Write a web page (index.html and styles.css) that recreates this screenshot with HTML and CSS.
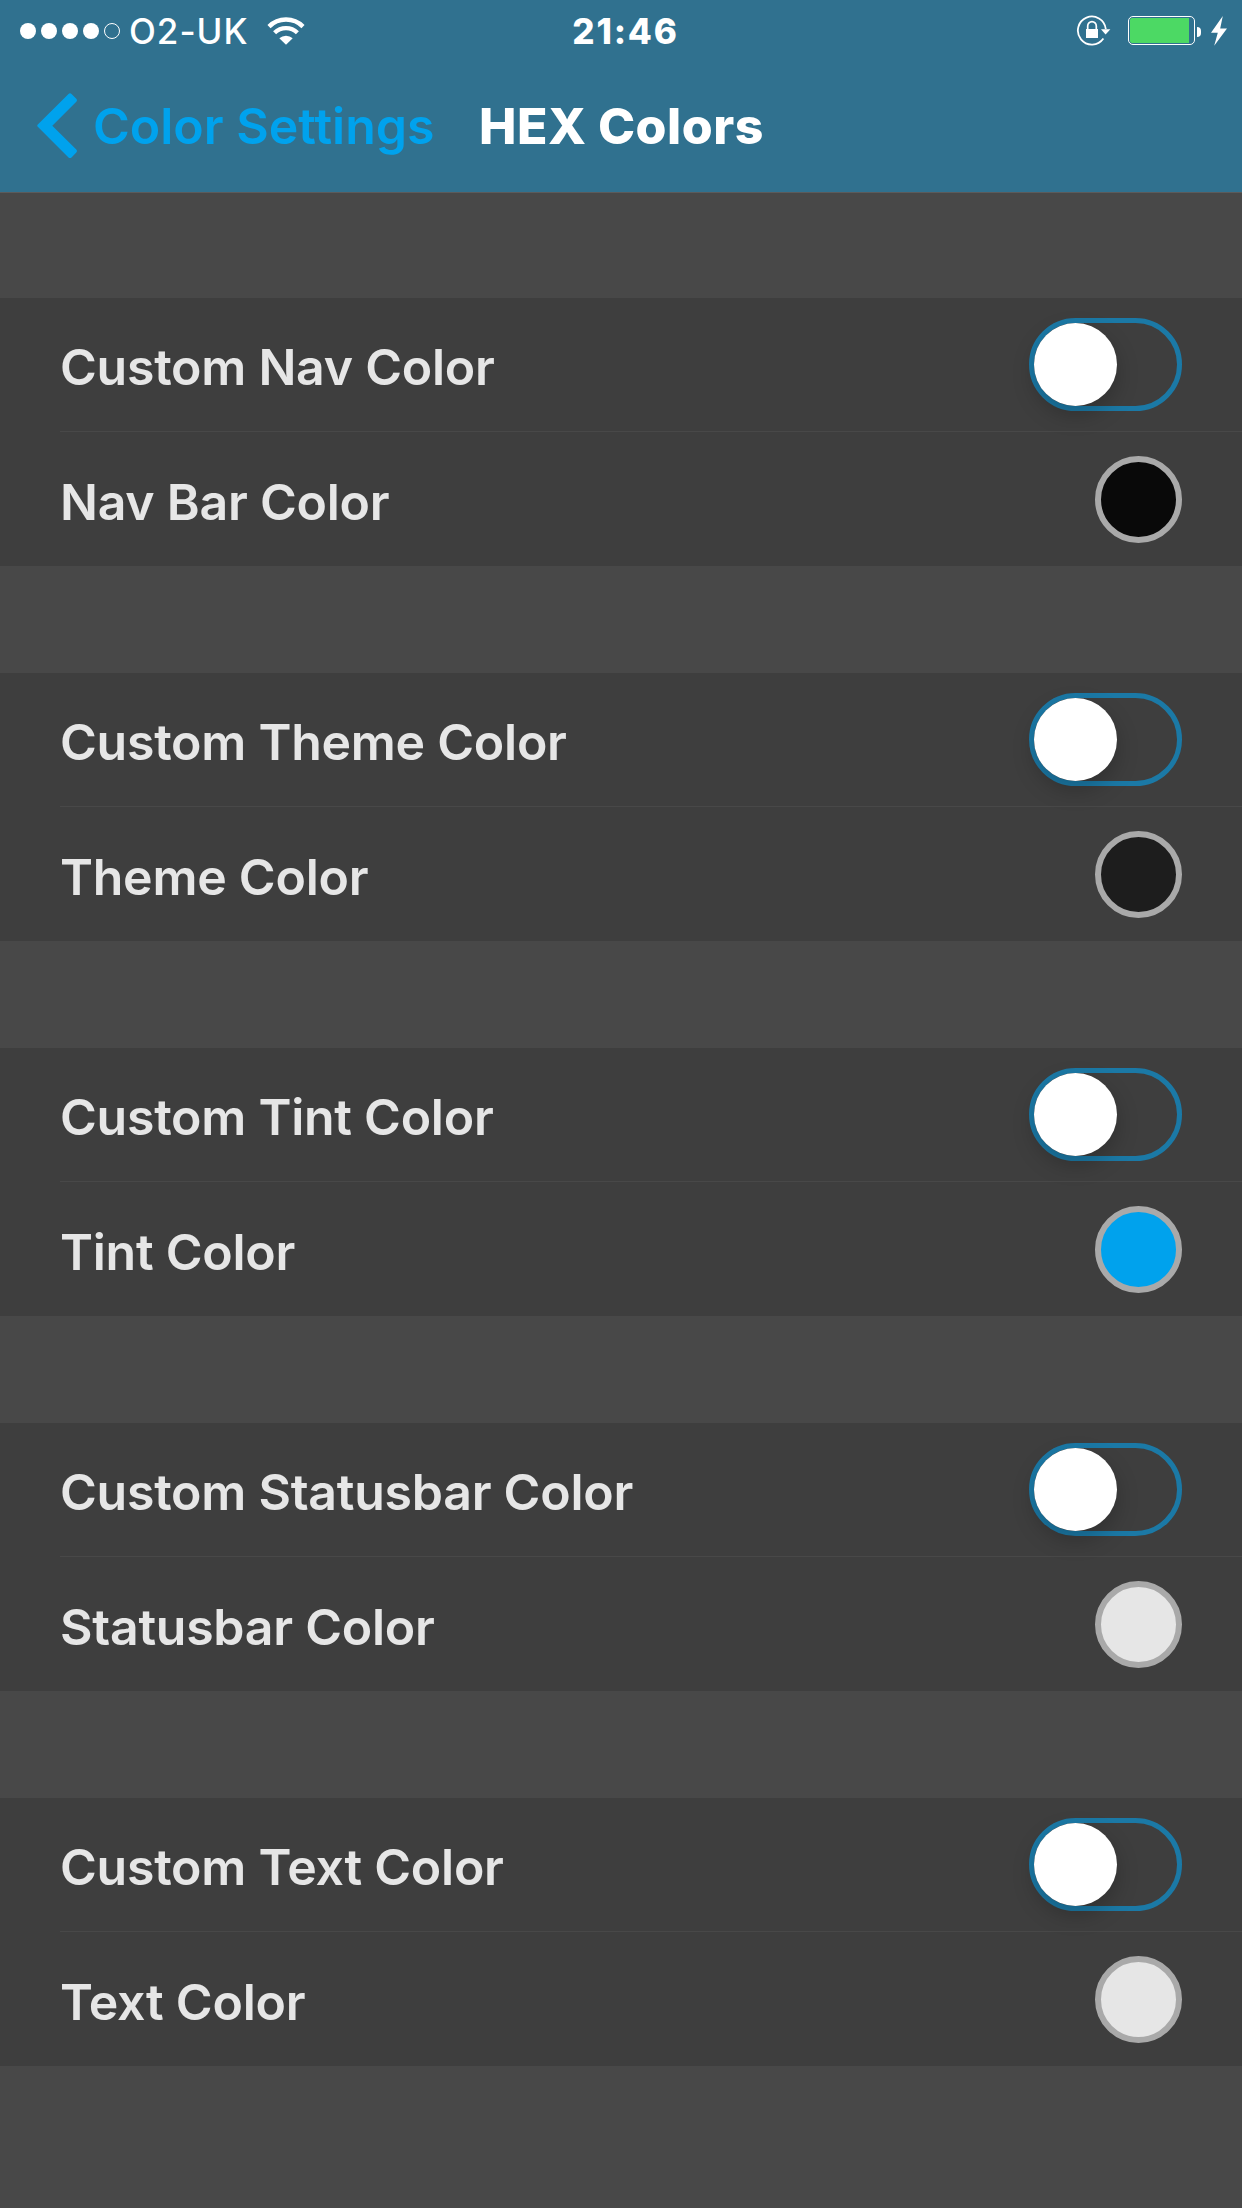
FILE: index.html
```html
<!DOCTYPE html>
<html lang="en">
<head>
  <meta charset="UTF-8">
  <meta name="viewport" content="width=device-width, initial-scale=1.0">
  <title>HEX Colors</title>
  <link rel="stylesheet" href="styles.css">
</head>
<body>
  <header class="header">
    <div class="status-bar">
      <div class="status-left">
        <div class="signal">
          <span class="dot"></span>
          <span class="dot"></span>
          <span class="dot"></span>
          <span class="dot"></span>
          <span class="dot empty"></span>
        </div>
        <span class="carrier">O2-UK</span>
        <svg class="wifi" width="38" height="28" viewBox="0 0 38 28">
          <path d="M2 9.6A24 24 0 0 1 36 9.6" fill="none" stroke="#fff" stroke-width="4.4"/>
          <path d="M7.6 15.8A16 16 0 0 1 30.4 15.8" fill="none" stroke="#fff" stroke-width="4.2"/>
          <path d="M12.3 21.2A10.2 10.2 0 0 1 25.7 21.2L19 27.8Z" fill="#fff"/>
        </svg>
      </div>
      <span class="time">21:46</span>
      <div class="status-right">
        <svg class="lock" width="36" height="32" viewBox="0 0 36 32">
          <path d="M27.4 23.5A14 14 0 1 1 29.8 14" fill="none" stroke="#fff" stroke-width="1.8"/>
          <path d="M25 14.3H34.4L29.6 19.4Z" fill="#fff"/>
          <rect x="10" y="14" width="12" height="9" fill="#fff"/>
          <path d="M11.7 15V11A4.3 4.3 0 0 1 20.3 11V15" fill="none" stroke="#fff" stroke-width="1.7"/>
        </svg>
        <div class="battery"><div class="battery-level"></div></div>
        <div class="battery-tip"></div>
        <svg class="bolt" width="16" height="30" viewBox="0 0 16 30">
          <path d="M11.8 0L0 16.8H6.8L3.2 29.8L16 12.4H9.2Z" fill="#fff"/>
        </svg>
      </div>
    </div>
    <nav class="nav-bar">
      <a class="back">
        <svg width="41" height="66" viewBox="0 0 41 66">
          <path d="M31.5 1Q33 -.3 34.5 1L39.3 5.8Q40.6 7.3 39.3 8.8L15.3 32.7L39.3 56.6Q40.6 58.1 39.3 59.6L34.5 64.4Q33 65.7 31.5 64.4L.8 33.8Q-.3 32.7 .8 31.6Z" fill="#00a2ed"/>
        </svg>
        <span>Color Settings</span>
      </a>
      <h1>HEX Colors</h1>
    </nav>
  </header>

  <main>
    <section class="group">
      <div class="row"><span>Custom Nav Color</span><div class="switch"></div></div>
      <div class="row"><span>Nav Bar Color</span><div class="swatch black"></div></div>
    </section>
    <section class="group">
      <div class="row"><span>Custom Theme Color</span><div class="switch"></div></div>
      <div class="row"><span>Theme Color</span><div class="swatch dark"></div></div>
    </section>
    <section class="group">
      <div class="row"><span>Custom Tint Color</span><div class="switch"></div></div>
      <div class="row"><span>Tint Color</span><div class="swatch blue"></div></div>
    </section>
    <section class="group">
      <div class="row"><span>Custom Statusbar Color</span><div class="switch"></div></div>
      <div class="row"><span>Statusbar Color</span><div class="swatch light"></div></div>
    </section>
    <section class="group">
      <div class="row"><span>Custom Text Color</span><div class="switch"></div></div>
      <div class="row"><span>Text Color</span><div class="swatch light"></div></div>
    </section>
  </main>
</body>
</html>
```
FILE: styles.css
```css
* {
  box-sizing: border-box;
}
body {
  margin: 0;
  min-height: 100vh;
  background: #484848;
  color: #e6e6e6;
  font-family: Inter, "Liberation Sans", sans-serif;
  font-size: 50px;
  font-weight: 560;
}
.header {
  height: 193px;
  background: #30718f;
  border-bottom: 1px solid #5b5b5b;
}
.status-bar {
  display: grid;
  grid-template-columns: 1fr auto 1fr;
  align-items: center;
  height: 60px;
  padding: 0 15px 0 20px;
  color: #fff;
  font-size: 35px;
  line-height: 60px;
  white-space: nowrap;
}
.status-left,
.status-right {
  display: flex;
  align-items: center;
}
.status-right {
  justify-content: flex-end;
}
.signal {
  display: flex;
  gap: 5px;
}
.dot {
  width: 16px;
  height: 16px;
  border-radius: 50%;
  background: #fff;
}
.dot.empty {
  background: none;
  border: 1px solid #fff;
}
.carrier {
  width: 120px;
  margin-left: 9px;
  padding-top: 1px;
  font-weight: 550;
  letter-spacing: 1px;
}
.wifi {
  margin-left: 18px;
}
.time {
  padding: 1px 0 0 4px;
  font-weight: 800;
  letter-spacing: 1.8px;
}
.lock {
  margin-right: 16px;
}
.battery {
  width: 67px;
  height: 29px;
  padding: 1px;
  border: 1px solid #fff;
  border-radius: 5px;
}
.battery-level {
  width: 59px;
  height: 25px;
  border-radius: 2px 0 0 2px;
  background: #4cd964;
}
.battery-tip {
  width: 4px;
  height: 10px;
  margin: 2px 10px 0 2px;
  border-radius: 0 4px 4px 0;
  background: #fff;
}
.nav-bar {
  display: flex;
  align-items: center;
  height: 132px;
  padding-left: 37px;
  line-height: 60px;
}
.back {
  display: flex;
  align-items: center;
  width: 442px;
  gap: 15px;
  color: #00a2ed;
  white-space: nowrap;
}
h1 {
  margin: 0;
  color: #fff;
  font-size: 50px;
  font-weight: 780;
  letter-spacing: 0.5px;
  white-space: nowrap;
}
main {
  display: flex;
  flex-direction: column;
  gap: 107px;
  padding-top: 105px;
}
.group {
  height: 268px;
  background: #3e3e3e;
}
.row {
  display: flex;
  align-items: center;
  justify-content: space-between;
  height: 134px;
  margin-left: 60px;
  padding-right: 60px;
}
.row:first-child {
  border-bottom: 1px solid #484848;
}
.row span {
  padding-top: 5px;
  letter-spacing: -0.25px;
}
.switch {
  width: 153px;
  height: 93px;
  border: 5px solid #1b79a6;
  border-radius: 47px;
}
.switch::before {
  content: "";
  display: block;
  width: 83px;
  height: 83px;
  margin-left: -0.5px;
  border-radius: 50%;
  background: #fff;
  box-shadow: 0 9px 22px rgba(0, 0, 0, 0.22);
}
.swatch {
  width: 87px;
  height: 87px;
  border: 6px solid #a9a9a9;
  border-radius: 50%;
}
.black {
  background: #090909;
}
.dark {
  background: #1d1d1d;
}
.blue {
  background: #00a2ed;
}
.light {
  background: #e6e6e6;
}
```
